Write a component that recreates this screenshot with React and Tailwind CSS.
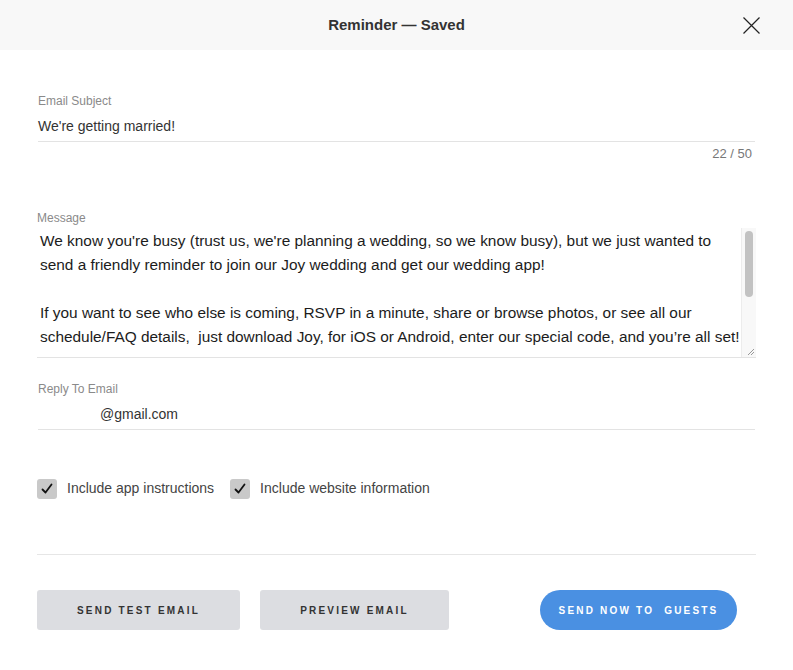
const font = { fontFamily: '"Liberation Sans", Arial, sans-serif' };

const Check = ({ label }) => (
    <label className="flex items-center gap-[10px]">
        <span className="flex h-[20px] w-[20px] items-center justify-center rounded-[3px] bg-[#c9c9c9]">
            <svg width="14" height="14" viewBox="0 0 14 14" fill="none">
                <path d="M2.5 7.5 L5.5 10.5 L11.5 2.5" stroke="#111" strokeWidth="1.8" strokeLinecap="round" strokeLinejoin="round" />
            </svg>
        </span>
        <span className="text-[14px] text-[#444]">{label}</span>
    </label>
);

const App = () => {
    return (
        <div className="min-h-[670px] w-[793px] bg-white text-[#333]" style={font}>
            {/* header */}
            <div className="relative flex h-[50px] items-center justify-center bg-[#f8f8f8]">
                <h1 className="text-[15px] font-semibold text-[#333]">Reminder — Saved</h1>
                <button className="absolute right-[33px] top-[17px]">
                    <svg width="17" height="17" viewBox="0 0 17 17">
                        <path d="M0.5 0.5 L16.5 16.5 M16.5 0.5 L0.5 16.5" stroke="#222" strokeWidth="1.2" />
                    </svg>
                </button>
            </div>

            <div className="px-[38px]">
                {/* subject */}
                <div className="pt-[44px]">
                    <div className="text-[12px] leading-[14px] text-[#8a8a8a]">Email Subject</div>
                    <div className="mt-[9px] border-b border-[#e3e3e3] pb-[6px] text-[14px] leading-[18px] text-[#333]">
                        We're getting married!
                    </div>
                    <div className="mt-[5px] pr-[3px] text-right text-[13px] leading-[14px] text-[#777]">22 / 50</div>
                </div>

                {/* message */}
                <div className="-mx-[1px] mt-[50px]">
                    <div className="text-[12px] leading-[14px] text-[#8a8a8a]">Message</div>
                    <div className="mt-[3px] flex h-[130px] border-b border-[#e3e3e3]">
                        <div className="flex-1 overflow-hidden pl-[3px] pt-[1px] text-[15.4px] leading-[24px] text-[#1c1c1c]">
                            <div>We know you're busy (trust us, we're planning a wedding, so we know busy), but we just wanted to</div>
                            <div>send a friendly reminder to join our Joy wedding and get our wedding app!</div>
                            <div>&nbsp;</div>
                            <div>If you want to see who else is coming, RSVP in a minute, share or browse photos, or see all our</div>
                            <div className="whitespace-pre">schedule/FAQ details,  just download Joy, for iOS or Android, enter our special code, and you’re all set!</div>
                        </div>
                        <div className="flex w-[15px] flex-col border-l border-[#ececec] bg-[#f8f8f8]">
                            <div className="mx-auto mt-[3px] h-[66px] w-[8px] rounded-full bg-[#c2c2c2]" />
                            <div className="flex-1" />
                            <svg width="14" height="10" viewBox="0 0 14 10" className="mb-[1px]">
                                <path d="M12 3 L6 9 M12 6 L9 9" stroke="#999" strokeWidth="1" />
                            </svg>
                        </div>
                    </div>
                </div>

                {/* reply */}
                <div className="mt-[24px]">
                    <div className="text-[12px] leading-[14px] text-[#8a8a8a]">Reply To Email</div>
                    <div className="mt-[9px] border-b border-[#e3e3e3] pb-[6px] pl-[62px] text-[14px] leading-[18px] text-[#333]">
                        @gmail.com
                    </div>
                </div>

                {/* options */}
                <div className="-ml-[1px] mt-[48px] flex items-center gap-[16px]">
                    <Check label="Include app instructions" />
                    <Check label="Include website information" />
                </div>

                <div className="-mx-[1px] mt-[55px] border-t border-[#e6e6e6]" />

                {/* actions */}
                <div className="-ml-[1px] mt-[35px] flex items-center">
                    <button className="h-[40px] w-[203px] rounded-[3px] bg-[#dcdde1] text-[10px] font-bold tracking-[2.2px] text-[#333]">
                        SEND TEST EMAIL
                    </button>
                    <button className="ml-[20px] h-[40px] w-[189px] rounded-[3px] bg-[#dcdde1] text-[10px] font-bold tracking-[2.2px] text-[#333]">
                        PREVIEW EMAIL
                    </button>
                    <button className="ml-[91px] h-[40px] w-[197px] rounded-full bg-[#4a90e2] text-[10px] font-bold tracking-[2.2px] text-white">
                        SEND NOW TO&nbsp; GUESTS
                    </button>
                </div>
            </div>
        </div>
    );
};

export default App;
